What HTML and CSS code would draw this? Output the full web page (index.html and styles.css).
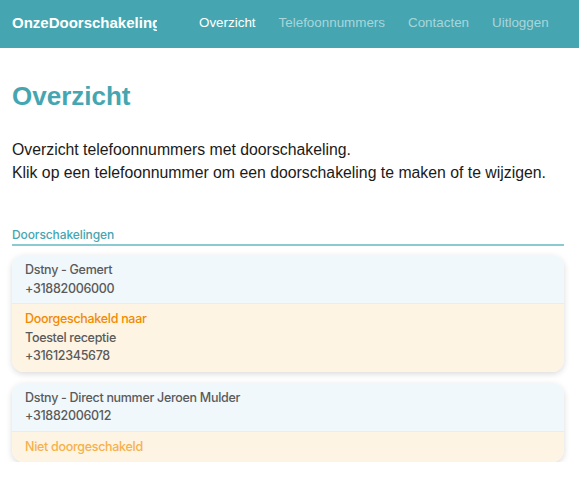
FILE: index.html
```html
<!DOCTYPE html>
<html lang="nl">
<head>
<meta charset="utf-8">
<title>Overzicht</title>
<link rel="stylesheet" href="styles.css">
</head>
<body>
<header class="navbar">
  <div class="brand">OnzeDoorschakeling</div>
  <nav class="nav">
    <a class="nav-link active">Overzicht</a>
    <a class="nav-link">Telefoonnummers</a>
    <a class="nav-link">Contacten</a>
    <a class="nav-link">Uitloggen</a>
  </nav>
</header>
<main class="content">
  <h1 class="title">Overzicht</h1>
  <p class="intro">Overzicht telefoonnummers met doorschakeling.<br>Klik op een telefoonnummer om een doorschakeling te maken of te wijzigen.</p>
  <h2 class="section-title">Doorschakelingen</h2>
  <div class="cards">
    <div class="card">
      <div class="card-top">
        <div class="line">Dstny - Gemert</div>
        <div class="line">+31882006000</div>
      </div>
      <div class="card-bottom">
        <div class="line status-on">Doorgeschakeld naar</div>
        <div class="line">Toestel receptie</div>
        <div class="line">+31612345678</div>
      </div>
    </div>
    <div class="card">
      <div class="card-top">
        <div class="line">Dstny - Direct nummer Jeroen Mulder</div>
        <div class="line">+31882006012</div>
      </div>
      <div class="card-bottom">
        <div class="line status-off">Niet doorgeschakeld</div>
      </div>
    </div>
  </div>
</main>
</body>
</html>
```
FILE: styles.css
```css
* { box-sizing: border-box; }
html, body { margin: 0; padding: 0; background: #ffffff; }
body { font-family: "Liberation Sans", Arial, sans-serif; color: #1f1f1f; }

.navbar {
  display: flex;
  align-items: center;
  height: 48px;
  background: #45a6b1;
  padding: 0 0 4px 12px;
}
.brand {
  width: 145px;
  overflow: hidden;
  white-space: nowrap;
  color: #ffffff;
  font-weight: bold;
  font-size: 15px;
  margin-right: 42px;
}
.nav { display: flex; gap: 23px; }
.nav-link {
  color: rgba(255,255,255,0.55);
  font-size: 13.4px;
  white-space: nowrap;
  text-decoration: none;
}
.nav-link.active { color: #ffffff; }

.content { padding: 0 15px 0 12px; }
.title {
  margin: 31px 0 0;
  font-size: 26px;
  font-weight: bold;
  color: #45a6b1;
  line-height: 34px;
}
.intro {
  margin: 25px 0 0;
  font-size: 15.8px;
  line-height: 23px;
  color: #1a1a1a;
}
.section-title {
  margin: 42px 0 0;
  font-family: Inter, "Liberation Sans", sans-serif;
  font-size: 12px;
  font-weight: 500;
  letter-spacing: -0.1px;
  color: #45a6b1;
  line-height: 18px;
  padding-bottom: 0;
  border-bottom: 2px solid #8ccad1;
}
.cards {
  display: flex;
  flex-direction: column;
  gap: 11px;
  margin-top: 9px;
}
.card {
  border-radius: 12px;
  overflow: hidden;
  box-shadow: 0 2px 6px rgba(0,0,0,0.15);
  font-family: Inter, "Liberation Sans", sans-serif;
  font-size: 12.5px;
  letter-spacing: -0.3px;
  font-weight: 500;
  color: #5a5a5a;
}
.line { line-height: 18.5px; white-space: nowrap; }
.card-top {
  background: #f0f8fb;
  padding: 6px 13px 5px;
  border-bottom: 1px solid #ececec;
}
.card-bottom {
  background: #fdf4e3;
  padding: 6px 13px 6px;
}
.status-on { color: #f28a00; }
.status-off { color: #f6b14d; }
```
